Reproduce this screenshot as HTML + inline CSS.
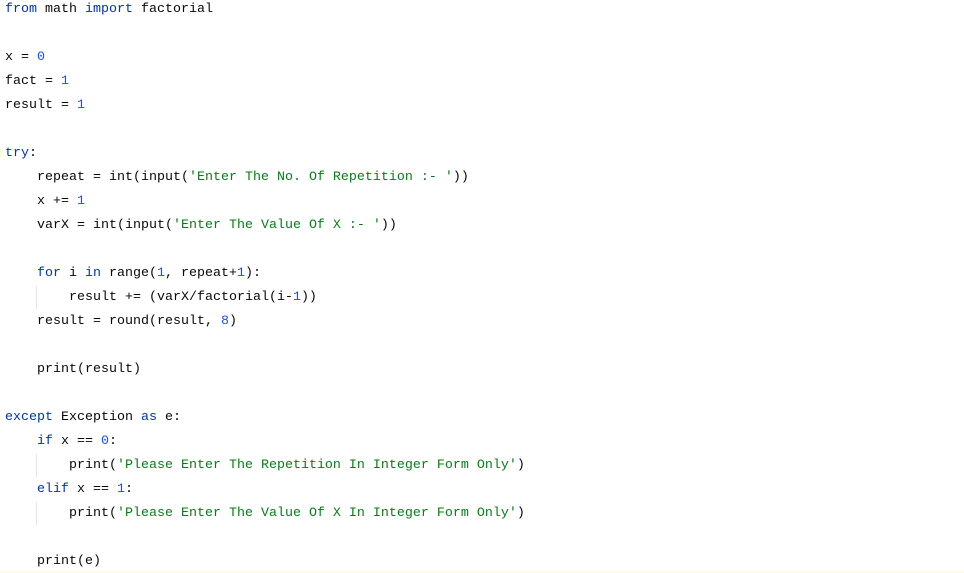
<!DOCTYPE html>
<html><head><style>
html,body{margin:0;padding:0;background:#fff;width:964px;height:573px;overflow:hidden;position:relative}
pre{position:absolute;left:5px;top:-2px;margin:0;font-family:"Liberation Mono",monospace;font-size:13.33px;line-height:24px;color:#080808}
.k{color:#0033b3}.n{color:#1750eb}.s{color:#067d17}
.g{position:absolute;left:36px;width:1px;background:#e6e6e6}
.strip{position:absolute;left:0;top:571px;width:964px;height:2px;background:#fdfbe6}
</style></head><body>
<div class="g" style="top:286px;height:24px"></div>
<div class="g" style="top:454px;height:24px"></div>
<div class="g" style="top:502px;height:24px"></div>
<pre><span class="k">from</span> math <span class="k">import</span> factorial

x = <span class="n">0</span>
fact = <span class="n">1</span>
result = <span class="n">1</span>

<span class="k">try</span>:
    repeat = int(input(<span class="s">'Enter The No. Of Repetition :- '</span>))
    x += <span class="n">1</span>
    varX = int(input(<span class="s">'Enter The Value Of X :- '</span>))

    <span class="k">for</span> i <span class="k">in</span> range(<span class="n">1</span>, repeat+<span class="n">1</span>):
        result += (varX/factorial(i-<span class="n">1</span>))
    result = round(result, <span class="n">8</span>)

    print(result)

<span class="k">except</span> Exception <span class="k">as</span> e:
    <span class="k">if</span> x == <span class="n">0</span>:
        print(<span class="s">'Please Enter The Repetition In Integer Form Only'</span>)
    <span class="k">elif</span> x == <span class="n">1</span>:
        print(<span class="s">'Please Enter The Value Of X In Integer Form Only'</span>)

    print(e)</pre>
<div class="strip"></div>
</body></html>
